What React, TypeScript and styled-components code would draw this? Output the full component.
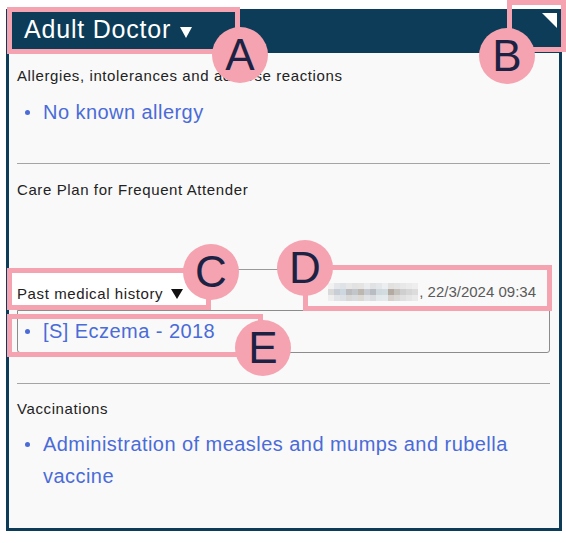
import React from "react";
import styled, { createGlobalStyle } from "styled-components";

const GlobalStyle = createGlobalStyle`
  html, body { margin: 0; padding: 0; background: #ffffff; }
  body { font-family: "Liberation Sans", Arial, sans-serif; }
  * { box-sizing: border-box; }
`;

const Page = styled.div`
  position: relative;
  width: 566px;
  height: 543px;
  padding: 9px 0 0 6px;
`;

const Panel = styled.section`
  width: 556px;
  height: 522px;
  border: 3px solid #0c3c57;
  background: #f9f9f9;
  display: flex;
  flex-direction: column;
`;

const Header = styled.header`
  flex: none;
  height: 41px;
  background: #0c3c57;
  display: flex;
  justify-content: space-between;
  align-items: flex-start;
  padding: 0 2px 0 15px;
`;

const Title = styled.h1`
  margin: 1px 0 0;
  display: flex;
  align-items: flex-start;
  gap: 9px;
  font-size: 25px;
  font-weight: normal;
  line-height: 32px;
  letter-spacing: 0.8px;
  color: #ffffff;
`;

const TitleCaret = styled.svg`
  margin-top: 14px;
  flex: none;
`;

const CornerButton = styled.svg`
  margin-top: 1px;
  flex: none;
`;

const Body = styled.div`
  display: flex;
  flex-direction: column;
  padding: 0 9px 0 8px;
`;

const SectionTitle = styled.div<{ $top: number }>`
  margin-top: ${(p) => p.$top}px;
  font-size: 15px;
  line-height: 18px;
  letter-spacing: 0.6px;
  color: #222222;
`;

const BulletList = styled.ul<{ $top: number }>`
  list-style: none;
  margin: ${(p) => p.$top}px 0 0;
  padding: 0;
`;

const Item = styled.li`
  display: flex;
  align-items: flex-start;
  font-size: 20px;
  line-height: 32px;
  letter-spacing: 0.45px;
  color: #4a6bd8;
`;

const Dot = styled.span<{ $inset: number }>`
  flex: none;
  width: 5px;
  height: 5px;
  border-radius: 50%;
  background: currentColor;
  margin: 14px 13px 0 ${(p) => p.$inset}px;
`;

const Rule = styled.hr<{ $top: number }>`
  margin: ${(p) => p.$top}px 0 0;
  border: 0;
  border-top: 1px solid #a5a5a5;
  height: 0;
`;

const PmhHeader = styled.div`
  margin-top: 70px;
  height: 41px;
  border-top: 1px solid #9a9a9a;
  padding: 15px 14px 0 0;
  display: flex;
  justify-content: space-between;
  align-items: flex-start;
`;

const PmhLabel = styled.span`
  position: relative;
  z-index: 3;
  display: flex;
  align-items: center;
  gap: 8px;
  font-size: 15px;
  line-height: 18px;
  letter-spacing: 0.6px;
  color: #222222;
`;

const Meta = styled.span`
  margin-top: -2px;
  display: flex;
  align-items: flex-start;
  font-size: 15px;
  line-height: 18px;
  color: #5a5a5a;
`;

const Mosaic = styled.span`
  display: grid;
  grid-template-columns: repeat(15, 6px);
  grid-auto-rows: 6px;
  margin-right: 1px;
`;

const Cell = styled.span<{ $c: string }>`
  background: ${(p) => p.$c};
`;

const PmhBody = styled.div`
  border: 1px solid #8c8c8c;
  border-radius: 0 0 3px 3px;
  padding: 4px 0 5px;
`;

const Overlay = styled.div`
  position: absolute;
  inset: 0;
  pointer-events: none;
  z-index: 2;
`;

const Callout = styled.div<{ $x: number; $y: number; $w: number; $h: number; $fill?: string }>`
  position: absolute;
  left: ${(p) => p.$x}px;
  top: ${(p) => p.$y}px;
  width: ${(p) => p.$w}px;
  height: ${(p) => p.$h}px;
  border: 5px solid #f5a3b0;
  background: ${(p) => p.$fill ?? "transparent"};
`;

const Badge = styled.div<{ $x: number; $y: number }>`
  position: absolute;
  left: ${(p) => p.$x - 28}px;
  top: ${(p) => p.$y - 28}px;
  width: 56px;
  height: 56px;
  border-radius: 50%;
  background: #f5a3b0;
  color: #1b2244;
  font-size: 44px;
  line-height: 56px;
  text-align: center;
`;

const mosaicColors = [
  "#f2f2f2", "#e4e6ea", "#dfe3e8", "#e7e7e8", "#e2e2e2", "#e6e4e2", "#eaecee", "#e0e2e4", "#e4e7e9", "#eceeef", "#e3e1df", "#e4e4e4", "#e8e8e8", "#ebebeb", "#eeeeee",
  "#dadada", "#c9ced6", "#cdd7e0", "#bcbcbe", "#c2c5ca", "#bdb7b2", "#c7cbd1", "#b9bdc3", "#cfd9de", "#d2dce0", "#b3aaa2", "#c4c0bc", "#cfcfcf", "#d6d6d6", "#dcdcdc",
  "#eeeeee", "#e1e3e6", "#dde1e5", "#d8d8d8", "#dadbde", "#dcd8d4", "#e0e2e5", "#dadcdf", "#e3e8ea", "#e4e9eb", "#d6d1cc", "#dbd9d7", "#e0e0e0", "#e5e5e5", "#eaeaea",
];

const callouts = [
  { k: "A", x: 7, y: 7, w: 233, h: 47, bx: 240, by: 55 },
  { k: "B", x: 507, y: 0, w: 59, h: 52, bx: 507, by: 56 },
  { k: "C", x: 7, y: 268, w: 204, h: 42, bx: 211, by: 272, fill: "#ffffff" },
  { k: "D", x: 303, y: 265, w: 249, h: 46, bx: 305, by: 268 },
  { k: "E", x: 7, y: 314, w: 256, h: 43, bx: 263, by: 348 },
];

export default function App() {
  return (
    <Page>
      <GlobalStyle />
      <Panel>
        <Header>
          <Title>
            Adult Doctor
            <TitleCaret width="12" height="11" viewBox="0 0 12 11">
              <polygon points="0,0 12,0 6,11" fill="#ffffff" />
            </TitleCaret>
          </Title>
          <CornerButton width="15" height="15" viewBox="0 0 15 15">
            <polygon points="0,0 15,0 15,15" fill="#ffffff" />
          </CornerButton>
        </Header>
        <Body>
          <SectionTitle $top={14}>Allergies, intolerances and adverse reactions</SectionTitle>
          <BulletList $top={11}>
            <Item>
              <Dot $inset={8} />
              <span>No known allergy</span>
            </Item>
          </BulletList>
          <Rule $top={35} />
          <SectionTitle $top={17}>Care Plan for Frequent Attender</SectionTitle>
          <PmhHeader>
            <PmhLabel>
              Past medical history
              <svg width="12" height="10" viewBox="0 0 12 10">
                <polygon points="0,0 12,0 6,10" fill="#111111" />
              </svg>
            </PmhLabel>
            <Meta>
              <Mosaic>
                {mosaicColors.map((c, i) => (
                  <Cell key={i} $c={c} />
                ))}
              </Mosaic>
              <span>, 22/3/2024 09:34</span>
            </Meta>
          </PmhHeader>
          <PmhBody>
            <BulletList $top={0}>
              <Item>
                <Dot $inset={7} />
                <span>[S] Eczema - 2018</span>
              </Item>
            </BulletList>
          </PmhBody>
          <Rule $top={30} />
          <SectionTitle $top={16}>Vaccinations</SectionTitle>
          <BulletList $top={10}>
            <Item>
              <Dot $inset={8} />
              <span>Administration of measles and mumps and rubella vaccine</span>
            </Item>
          </BulletList>
        </Body>
      </Panel>
      <Overlay>
        {callouts.map((c) => (
          <Callout key={c.k + "box"} $x={c.x} $y={c.y} $w={c.w} $h={c.h} $fill={c.fill} />
        ))}
        {callouts.map((c) => (
          <Badge key={c.k} $x={c.bx} $y={c.by}>
            {c.k}
          </Badge>
        ))}
      </Overlay>
    </Page>
  );
}
